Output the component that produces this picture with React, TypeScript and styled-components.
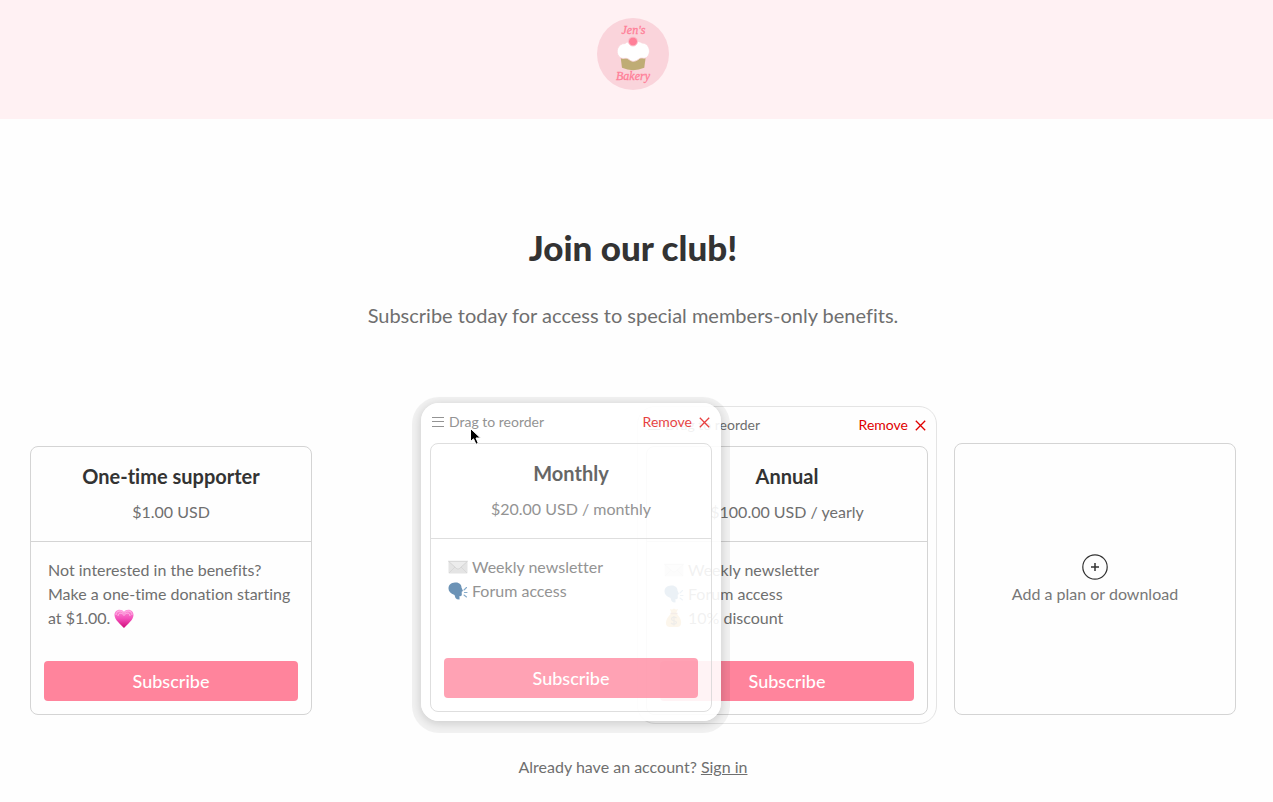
import React from "react";
import styled, { createGlobalStyle, css } from "styled-components";

const GlobalStyle = createGlobalStyle`
  * { box-sizing: border-box; }
  body {
    margin: 0;
    background: #fefefe;
    color: #6f6f6f;
    font-family: Lato, "Open Sans", sans-serif;
    font-size: 16px;
    line-height: 24px;
    font-variant-ligatures: none;
  }
  button { font: inherit; cursor: pointer; }
`;

const Page = styled.div`
  min-height: 100vh;
`;

const Banner = styled.header`
  display: flex;
  justify-content: center;
  padding: 18px 7px 29px 0;
  background: #fff1f3;
`;

const Logo = styled.svg`
  display: block;
  width: 72px;
  height: 72px;
`;

const Main = styled.main`
  padding: 104px 28px 20px 21px;
  text-align: center;
`;

const Title = styled.h1`
  margin: 0;
  color: #333;
  font-size: 35px;
  line-height: 48px;
  font-weight: 900;
`;

const Subtitle = styled.p`
  margin: 30px 0 77px;
  font-size: 20px;
  line-height: 28px;
`;

const Plans = styled.section`
  display: grid;
  grid-template-columns: repeat(4, minmax(0, 1fr));
  gap: 8px;
  align-items: end;
`;

const Slot = styled.article<{ $outlined?: boolean; $dragging?: boolean }>`
  position: relative;
  padding: 8px;
  border: 1px solid ${(p) => (p.$outlined ? "#e4e4e4" : "transparent")};
  border-radius: 18px;
  ${(p) =>
    p.$dragging &&
    css`
      z-index: 2;
      background: rgba(255, 255, 255, 0.9);
      box-shadow: 0 3px 0 9px rgba(0, 0, 0, 0.05), 0 2px 8px 1px rgba(0, 0, 0, 0.14);
    `}
`;

const SlotContent = styled.div<{ $faded?: boolean }>`
  opacity: ${(p) => (p.$faded ? 0.75 : 1)};
`;

const Toolbar = styled.div`
  display: flex;
  justify-content: space-between;
  height: 20px;
  margin-bottom: 11px;
  padding: 0 2px;
`;

const ToolButton = styled.button<{ $danger?: boolean }>`
  display: flex;
  align-items: center;
  gap: ${(p) => (p.$danger ? 7 : 5)}px;
  padding: 0;
  border: 0;
  background: none;
  color: ${(p) => (p.$danger ? "#e00000" : "#6f6f6f")};
  font-size: 14px;
  line-height: 20px;
`;

const Card = styled.div`
  display: flex;
  flex-direction: column;
  min-height: 269px;
  border: 1px solid #d4d4d4;
  border-radius: 8px;
`;

const CardHeader = styled.header`
  padding: 17px 16px;
  border-bottom: 1px solid #d4d4d4;
`;

const PlanName = styled.h2`
  margin: 0 0 12px;
  color: #333;
  font-size: 20px;
  line-height: 24px;
  font-weight: 700;
`;

const Price = styled.p`
  margin: 0;
`;

const CardBody = styled.div`
  flex: 1;
  display: flex;
  flex-direction: column;
  justify-content: space-between;
  padding: 16px 13px 13px;
  text-align: left;
`;

const Description = styled.p`
  margin: 0;
  padding: 0 4px;
`;

const Benefits = styled.ul`
  margin: 0;
  padding: 0 4px;
  list-style: none;
`;

const Benefit = styled.li`
  display: flex;
  align-items: center;
  gap: 4px;
`;

const Emoji = styled.svg`
  flex: none;
  width: 20px;
  height: 20px;
  vertical-align: -5px;
`;

const Subscribe = styled.button`
  height: 40px;
  padding: 0;
  border: 0;
  border-radius: 4px;
  background: #ff849c;
  color: #fff;
  font-size: 18px;
  line-height: 24px;
  font-weight: 500;
`;

const AddCard = styled.button`
  display: flex;
  flex-direction: column;
  align-items: center;
  justify-content: center;
  gap: 2px;
  width: 100%;
  height: 272px;
  padding: 2px 0 0;
  border: 1px solid #d4d4d4;
  border-radius: 8px;
  background: none;
  color: #777;
`;

const SignIn = styled.p`
  margin: 31px 0 0;
`;

const Link = styled.a`
  color: inherit;
  text-decoration: underline;
`;

const Pointer = styled.svg`
  position: absolute;
  top: 23px;
  left: 47px;
  width: 13px;
  height: 19px;
`;

const BakeryLogo = () => (
  <Logo viewBox="0 0 72 72" role="img" aria-label="Jen's Bakery">
    <circle cx="36" cy="36" r="36" fill="#fad4db" />
    <g fill="#ff7f98" stroke="#ff7f98" strokeWidth="0.3" fontFamily="'Liberation Serif', serif" fontStyle="italic" textAnchor="middle">
      <text x="36.500" y="16" fontSize="12">Jen's</text>
      <text x="36" y="62" fontSize="12">Bakery</text>
    </g>
    <path d="M23.500 38H48.800L47.300 49.800Q36 54.500 25 49.800Z" fill="#bfac75" />
    <path
      d="M28 25.500C31 22.500 42 22.500 45 25C51.500 25 54.500 33 51 38C48 42 45.500 39 42.500 40.500C39 43.500 35.500 44.500 32 41.500C28.500 38.500 26 42.500 22 38.500C18 33.500 21 25.500 28 25.500Z"
      fill="#fff" stroke="#fad4db" strokeWidth="0.800"
    />
    <circle cx="36" cy="23.500" r="4.500" fill="#ff7f98" stroke="#fbc4ce" strokeWidth="1" />
  </Logo>
);

const GripIcon = () => (
  <svg width="12" height="12" viewBox="0 0 12 12" stroke="currentColor" strokeWidth="1.200" aria-hidden>
    <path d="M0 1.500H12M0 5.500H12M0 10.500H12" />
  </svg>
);

const CrossIcon = () => (
  <svg width="11" height="11" viewBox="0 0 11 11" stroke="currentColor" strokeWidth="1.300" aria-hidden>
    <path d="M.8 .8L10.200 10.200M10.200 .8L.8 10.200" />
  </svg>
);

const PlusCircle = () => (
  <svg width="26" height="26" viewBox="0 0 26 26" fill="none" stroke="#333" aria-hidden>
    <circle cx="13" cy="13" r="12.200" strokeWidth="1.200" />
    <path d="M13 9V17M9 13H17" strokeWidth="1.500" />
  </svg>
);

const HeartEmoji = () => (
  <Emoji viewBox="0 0 20 20" role="img" aria-label="growing heart">
    <defs>
      <linearGradient id="heart" x1="0" y1="0" x2="0" y2="1">
        <stop offset="0" stopColor="#ff8ed8" />
        <stop offset="0.500" stopColor="#f34fb8" />
        <stop offset="1" stopColor="#cf0a78" />
      </linearGradient>
    </defs>
    <path d="M10 19C7 15.500 .5 11 .5 6C.5 .5 7.500 -1 10 3C12.500 -1 19.500 .5 19.500 6C19.500 11 13 15.500 10 19Z" fill="url(#heart)" />
    <path
      d="M2 6C2 1.500 7.500 .5 10 4.500C12.500 .5 18 1.500 18 6M4 7C4 3.500 8 3 10 6.500C12 3 16 3.500 16 7"
      fill="none" stroke="#ffc6eb" strokeWidth="0.800"
    />
  </Emoji>
);

const EnvelopeEmoji = () => (
  <Emoji viewBox="0 0 20 20" role="img" aria-label="envelope">
    <rect x="0.500" y="4" width="19" height="12.500" rx="0.800" fill="#dcdcdc" />
    <path d="M1 16L7.500 9.500M19 16L12.500 9.500" stroke="#c4c4c4" strokeWidth="0.700" />
    <path d="M.5 4.300L8.500 11.500Q10 12.800 11.500 11.500L19.500 4.300Z" fill="#e6e6e6" stroke="#bdbdbd" strokeWidth="0.700" />
  </Emoji>
);

const SpeakingEmoji = () => (
  <Emoji viewBox="0 0 20 20" role="img" aria-label="speaking head">
    <path
      d="M7 1.500C11 1 13.500 3.500 13.500 6.500L15 10L13.700 10.800L13.800 14Q13.500 15.500 11.500 15L11.500 18.500Q8.500 18.500 7.500 17L6.500 14C2.500 12.500 .5 10.500 .5 7.500C.5 4 3 1.700 7 1.500Z"
      fill="#3b6f9e"
    />
    <path d="M16 9L18.500 6.500M16.500 11.500H19M16 14L18.500 16" stroke="#5d8fb9" strokeWidth="1.100" strokeLinecap="round" />
  </Emoji>
);

const MoneyEmoji = () => (
  <Emoji viewBox="0 0 20 20" role="img" aria-label="money bag">
    <path d="M6 1Q8 2 10 .5Q12 2 14 1L12 5.500C15 7.500 18 12 17 16Q16.500 19 13 19H6Q2.500 19 2 16C1.500 12 4.500 7.500 7.500 5.500Z" fill="#e0a040" />
    <path d="M6.500 5.500H13.500" stroke="#9b4c20" strokeWidth="1.500" />
    <path d="M12.500 10C11 8.500 7.500 9 7.500 11C7.500 13.500 12.500 12 12.500 14.500C12.500 16.500 8.500 16.500 7 15M10 8V17.500" fill="none" stroke="#57452c" strokeWidth="1.200" />
  </Emoji>
);

type PlanProps = {
  name: string;
  price: string;
  reorderable?: boolean;
  drag?: { x: number; y: number };
  children: React.ReactNode;
};

const Plan = ({ name, price, reorderable, drag, children }: PlanProps) => (
  <Slot
    $outlined={reorderable && !drag}
    $dragging={!!drag}
    style={drag ? { transform: `translate(${drag.x}px, ${drag.y}px)` } : undefined}
  >
    <SlotContent $faded={!!drag}>
      {reorderable && (
        <Toolbar>
          <ToolButton type="button"><GripIcon />Drag to reorder</ToolButton>
          <ToolButton type="button" $danger>Remove<CrossIcon /></ToolButton>
        </Toolbar>
      )}
      <Card>
        <CardHeader>
          <PlanName>{name}</PlanName>
          <Price>{price}</Price>
        </CardHeader>
        <CardBody>
          {children}
          <Subscribe type="button">Subscribe</Subscribe>
        </CardBody>
      </Card>
    </SlotContent>
    {drag && (
      <Pointer viewBox="0 0 13 19" aria-hidden>
        <path d="M1.500 1.500V14.500L4.500 11.800L7 17.300L9.300 16.300L7 11H11.500Z" fill="#000" stroke="#fff" strokeWidth="1" />
      </Pointer>
    )}
  </Slot>
);

export default function App() {
  return (
    <Page>
      <GlobalStyle />
      <Banner><BakeryLogo /></Banner>
      <Main>
        <Title>Join our club!</Title>
        <Subtitle>Subscribe today for access to special members-only benefits.</Subtitle>
        <Plans>
          <Plan name="One-time supporter" price="$1.00 USD">
            <Description>
              Not interested in the benefits? Make a one-time donation starting at $1.00. <HeartEmoji />
            </Description>
          </Plan>
          <Plan name="Monthly" price="$20.00 USD / monthly" reorderable drag={{ x: 92, y: -3 }}>
            <Benefits>
              <Benefit><EnvelopeEmoji />Weekly newsletter</Benefit>
              <Benefit><SpeakingEmoji />Forum access</Benefit>
            </Benefits>
          </Plan>
          <Plan name="Annual" price="$100.00 USD / yearly" reorderable>
            <Benefits>
              <Benefit><EnvelopeEmoji />Weekly newsletter</Benefit>
              <Benefit><SpeakingEmoji />Forum access</Benefit>
              <Benefit><MoneyEmoji />10% discount</Benefit>
            </Benefits>
          </Plan>
          <Slot>
            <AddCard type="button"><PlusCircle />Add a plan or download</AddCard>
          </Slot>
        </Plans>
        <SignIn>Already have an account? <Link href="#sign-in">Sign in</Link></SignIn>
      </Main>
    </Page>
  );
}
